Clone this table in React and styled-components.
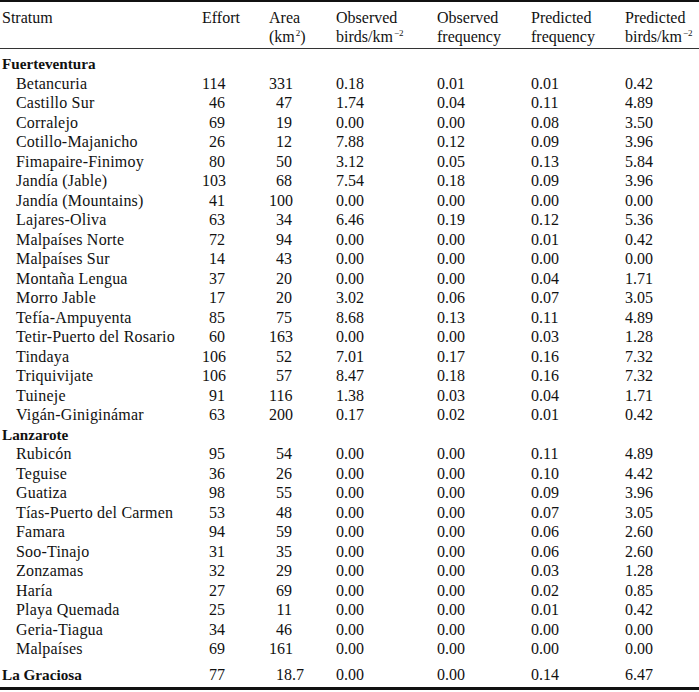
import React from 'react';
import styled, { createGlobalStyle } from 'styled-components';

const GlobalStyle = createGlobalStyle`
  html, body {
    margin: 0;
    padding: 0;
    background: #ffffff;
  }
`;

const SERIF = '"Liberation Serif", "DejaVu Serif", "Times New Roman", serif';
const COLS = '202px 67px 67px 101px 94px 94px 1fr';

const Table = styled.div`
  width: 699px;
  font-family: ${SERIF};
  color: #111;
  border-top: 2px solid #111;
  border-bottom: 3px solid #111;
  padding-bottom: 3px;
`;

const HeadRow = styled.div`
  display: grid;
  grid-template-columns: ${COLS};
  padding: 6px 0 2px;
  border-bottom: 1px solid #333;
  font-size: 16px;
  line-height: 19px;
  height: 38px;
`;

const HeadCell = styled.div`
  padding-left: ${props => props.$first ? '2px' : '0'};
  white-space: nowrap;
`;

const Body = styled.div`
  padding-top: 5px;
`;

const Row = styled.div`
  display: grid;
  grid-template-columns: ${COLS};
  height: 19.5px;
  line-height: 19.5px;
  font-size: 16px;
  margin-top: ${props => props.$gap ? '6px' : '0'};
`;

const Name = styled.div`
  padding-left: ${props => props.$group ? '2px' : '16px'};
  font-weight: ${props => props.$group ? 700 : 400};
  font-size: ${props => props.$group ? '15.2px' : '16px'};
  letter-spacing: ${props => props.$group ? '0' : '0.2px'};
  white-space: nowrap;
`;

const IntBox = styled.span`
  display: inline-block;
  width: ${props => props.$w}px;
  text-align: right;
`;

const Val = styled.div`
  white-space: nowrap;
`;

const Sup = styled.sup`
  font-size: 9px;
  line-height: 0;
  vertical-align: 6px;
  margin-left: 1px;
`;

const fuerteventura = [
  ['Betancuria', '114', '331', '0.18', '0.01', '0.01', '0.42'],
  ['Castillo Sur', '46', '47', '1.74', '0.04', '0.11', '4.89'],
  ['Corralejo', '69', '19', '0.00', '0.00', '0.08', '3.50'],
  ['Cotillo-Majanicho', '26', '12', '7.88', '0.12', '0.09', '3.96'],
  ['Fimapaire-Finimoy', '80', '50', '3.12', '0.05', '0.13', '5.84'],
  ['Jandía (Jable)', '103', '68', '7.54', '0.18', '0.09', '3.96'],
  ['Jandía (Mountains)', '41', '100', '0.00', '0.00', '0.00', '0.00'],
  ['Lajares-Oliva', '63', '34', '6.46', '0.19', '0.12', '5.36'],
  ['Malpaíses Norte', '72', '94', '0.00', '0.00', '0.01', '0.42'],
  ['Malpaíses Sur', '14', '43', '0.00', '0.00', '0.00', '0.00'],
  ['Montaña Lengua', '37', '20', '0.00', '0.00', '0.04', '1.71'],
  ['Morro Jable', '17', '20', '3.02', '0.06', '0.07', '3.05'],
  ['Tefía-Ampuyenta', '85', '75', '8.68', '0.13', '0.11', '4.89'],
  ['Tetir-Puerto del Rosario', '60', '163', '0.00', '0.00', '0.03', '1.28'],
  ['Tindaya', '106', '52', '7.01', '0.17', '0.16', '7.32'],
  ['Triquivijate', '106', '57', '8.47', '0.18', '0.16', '7.32'],
  ['Tuineje', '91', '116', '1.38', '0.03', '0.04', '1.71'],
  ['Vigán-Giniginámar', '63', '200', '0.17', '0.02', '0.01', '0.42'],
];

const lanzarote = [
  ['Rubicón', '95', '54', '0.00', '0.00', '0.11', '4.89'],
  ['Teguise', '36', '26', '0.00', '0.00', '0.10', '4.42'],
  ['Guatiza', '98', '55', '0.00', '0.00', '0.09', '3.96'],
  ['Tías-Puerto del Carmen', '53', '48', '0.00', '0.00', '0.07', '3.05'],
  ['Famara', '94', '59', '0.00', '0.00', '0.06', '2.60'],
  ['Soo-Tinajo', '31', '35', '0.00', '0.00', '0.06', '2.60'],
  ['Zonzamas', '32', '29', '0.00', '0.00', '0.03', '1.28'],
  ['Haría', '27', '69', '0.00', '0.00', '0.02', '0.85'],
  ['Playa Quemada', '25', '11', '0.00', '0.00', '0.01', '0.42'],
  ['Geria-Tiagua', '34', '46', '0.00', '0.00', '0.00', '0.00'],
  ['Malpaíses', '69', '161', '0.00', '0.00', '0.00', '0.00'],
];

function Area({ value }) {
  const [int, frac] = value.split('.');
  return (
    <Val>
      <IntBox $w={23}>{int}</IntBox>
      {frac !== undefined && '.' + frac}
    </Val>
  );
}

function DataRow({ row, group, gap }) {
  const [name, effort, area, ob, of, pf, pb] = row;
  return (
    <Row $gap={gap}>
      <Name $group={group}>{name}</Name>
      <Val><IntBox $w={23}>{effort}</IntBox></Val>
      <Area value={area} />
      <Val>{ob}</Val>
      <Val>{of}</Val>
      <Val>{pf}</Val>
      <Val>{pb}</Val>
    </Row>
  );
}

function GroupRow({ name }) {
  return (
    <Row>
      <Name $group>{name}</Name>
    </Row>
  );
}

export default function App() {
  return (
    <>
      <GlobalStyle />
      <Table>
        <HeadRow>
          <HeadCell $first>Stratum</HeadCell>
          <HeadCell>Effort</HeadCell>
          <HeadCell>Area<br />(km<Sup>2</Sup>)</HeadCell>
          <HeadCell>Observed<br />birds/km<Sup>−2</Sup></HeadCell>
          <HeadCell>Observed<br />frequency</HeadCell>
          <HeadCell>Predicted<br />frequency</HeadCell>
          <HeadCell>Predicted<br />birds/km<Sup>−2</Sup></HeadCell>
        </HeadRow>
        <Body>
          <GroupRow name="Fuerteventura" />
          {fuerteventura.map(r => <DataRow key={r[0]} row={r} />)}
          <GroupRow name="Lanzarote" />
          {lanzarote.map(r => <DataRow key={r[0]} row={r} />)}
          <DataRow group gap row={['La Graciosa', '77', '18.7', '0.00', '0.00', '0.14', '6.47']} />
        </Body>
      </Table>
    </>
  );
}
